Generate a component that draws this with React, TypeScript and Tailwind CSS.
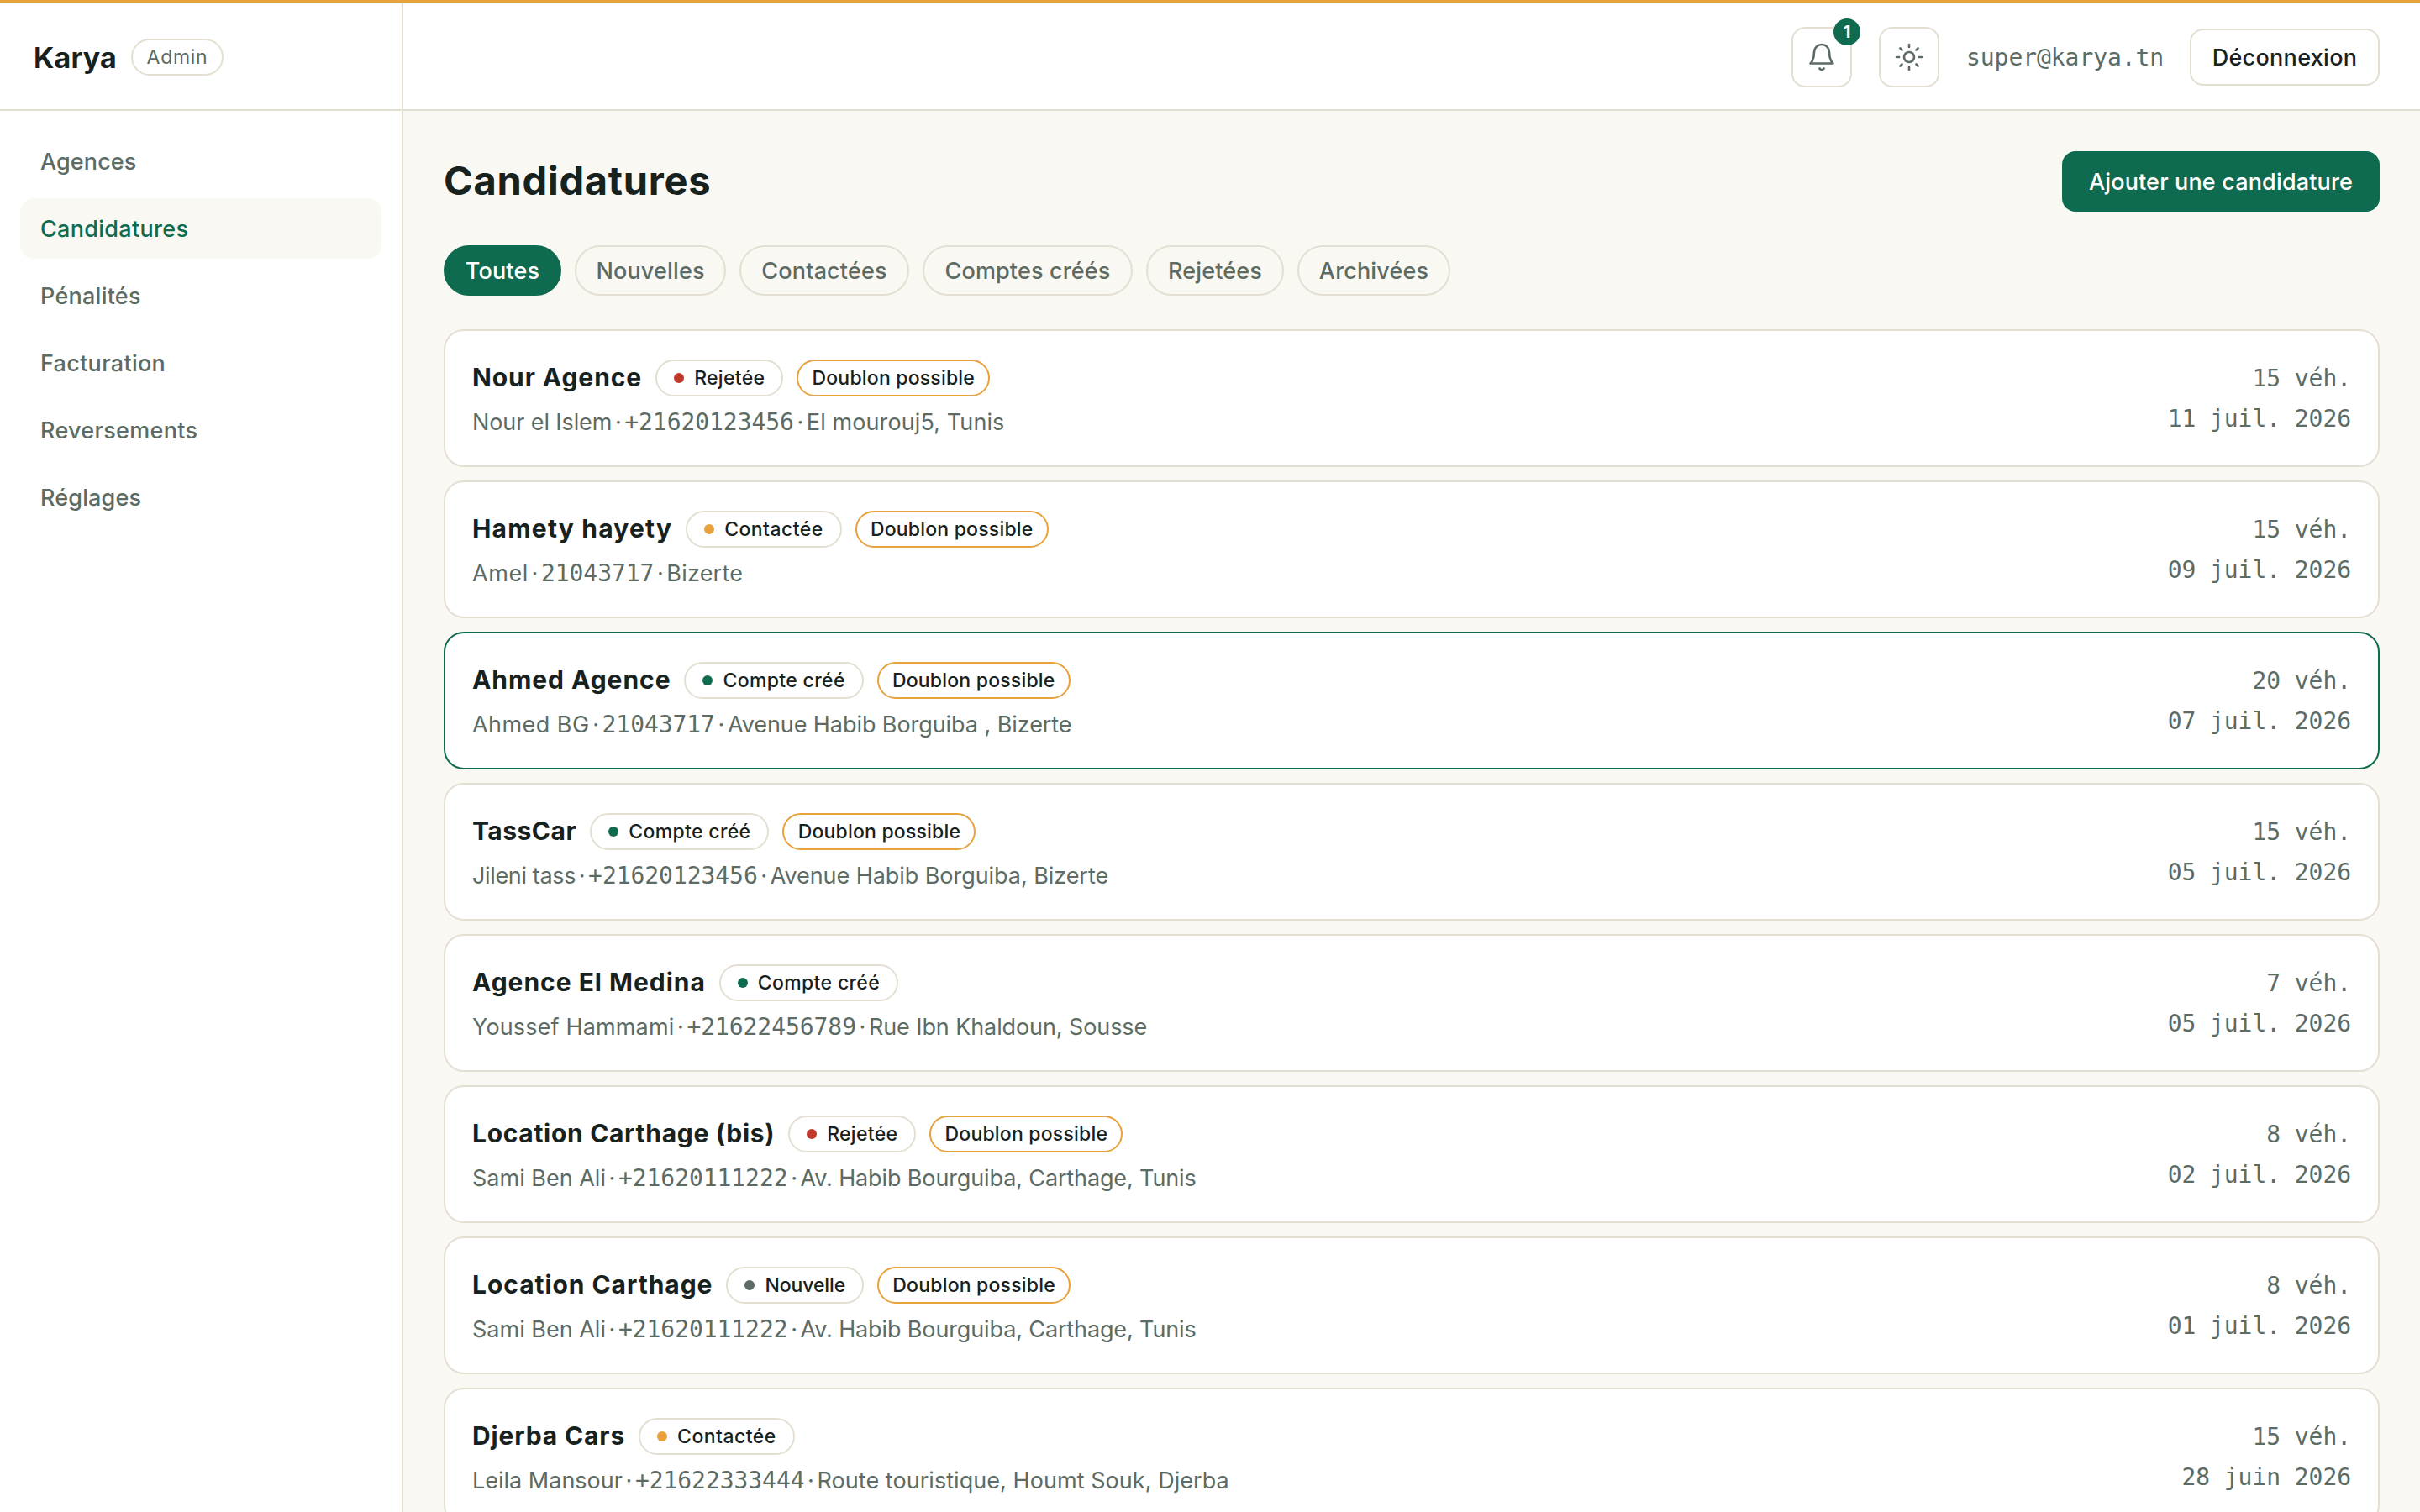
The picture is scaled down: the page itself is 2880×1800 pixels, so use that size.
import React from 'react';

type Status = 'Rejetée' | 'Contactée' | 'Compte créé' | 'Nouvelle';

interface Application {
  agency: string;
  agencyTracking: string;
  status: Status;
  duplicate: boolean;
  contact: string;
  contactTracking: string;
  phone: string;
  address: string;
  addressTracking: string;
  vehicles: number;
  date: string;
  active?: boolean;
}

const statusStyle: Record<Status, { dot: string; tracking: string }> = {
  'Rejetée': { dot: 'bg-[#c0392b]', tracking: 'tracking-[0.3px]' },
  'Contactée': { dot: 'bg-[#e9a23b]', tracking: 'tracking-[0.45px]' },
  'Compte créé': { dot: 'bg-[#0f6b4f]', tracking: 'tracking-[0.35px]' },
  'Nouvelle': { dot: 'bg-[#5c6b64]', tracking: 'tracking-[-0.1px]' },
};

const applications: Application[] = [
  { agency: 'Nour Agence', agencyTracking: 'tracking-[0.92px]', status: 'Rejetée', duplicate: true, contact: 'Nour el Islem', contactTracking: 'tracking-[-0.1px]', phone: '+21620123456', address: 'El mourouj5, Tunis', addressTracking: 'tracking-[0.1px]', vehicles: 15, date: '11 juil. 2026' },
  { agency: 'Hamety hayety', agencyTracking: 'tracking-[1.2px]', status: 'Contactée', duplicate: true, contact: 'Amel', contactTracking: 'tracking-[0.6px]', phone: '21043717', address: 'Bizerte', addressTracking: 'tracking-[0.2px]', vehicles: 15, date: '09 juil. 2026' },
  { agency: 'Ahmed Agence', agencyTracking: 'tracking-[0.95px]', status: 'Compte créé', duplicate: true, contact: 'Ahmed BG', contactTracking: 'tracking-[0.45px]', phone: '21043717', address: 'Avenue Habib Borguiba , Bizerte', addressTracking: 'tracking-[-0.07px]', vehicles: 20, date: '07 juil. 2026', active: true },
  { agency: 'TassCar', agencyTracking: 'tracking-[0.5px]', status: 'Compte créé', duplicate: true, contact: 'Jileni tass', contactTracking: 'tracking-[-0.35px]', phone: '+21620123456', address: 'Avenue Habib Borguiba, Bizerte', addressTracking: 'tracking-[-0.06px]', vehicles: 15, date: '05 juil. 2026' },
  { agency: 'Agence El Medina', agencyTracking: 'tracking-[0.97px]', status: 'Compte créé', duplicate: false, contact: 'Youssef Hammami', contactTracking: 'tracking-[0.15px]', phone: '+21622456789', address: 'Rue Ibn Khaldoun, Sousse', addressTracking: 'tracking-[-0.1px]', vehicles: 7, date: '05 juil. 2026' },
  { agency: 'Location Carthage (bis)', agencyTracking: 'tracking-[0.68px]', status: 'Rejetée', duplicate: true, contact: 'Sami Ben Ali', contactTracking: 'tracking-normal', phone: '+21620111222', address: 'Av. Habib Bourguiba, Carthage, Tunis', addressTracking: 'tracking-[-0.13px]', vehicles: 8, date: '02 juil. 2026' },
  { agency: 'Location Carthage', agencyTracking: 'tracking-[0.94px]', status: 'Nouvelle', duplicate: true, contact: 'Sami Ben Ali', contactTracking: 'tracking-normal', phone: '+21620111222', address: 'Av. Habib Bourguiba, Carthage, Tunis', addressTracking: 'tracking-[-0.13px]', vehicles: 8, date: '01 juil. 2026' },
  { agency: 'Djerba Cars', agencyTracking: 'tracking-[0.85px]', status: 'Contactée', duplicate: false, contact: 'Leila Mansour', contactTracking: 'tracking-normal', phone: '+21622333444', address: 'Route touristique, Houmt Souk, Djerba', addressTracking: 'tracking-[0.05px]', vehicles: 15, date: '28 juin 2026' },
];

const navItems = [
  { label: 'Agences', tracking: 'tracking-[0.1px]' },
  { label: 'Candidatures', tracking: 'tracking-[0.3px]' },
  { label: 'Pénalités', tracking: 'tracking-[0.25px]' },
  { label: 'Facturation', tracking: 'tracking-[0.3px]' },
  { label: 'Reversements', tracking: 'tracking-[0.3px]' },
  { label: 'Réglages', tracking: 'tracking-[0.15px]' },
];

const filters = [
  { label: 'Toutes', width: 'w-[140px]' },
  { label: 'Nouvelles', width: 'w-[180px]' },
  { label: 'Contactées', width: 'w-[202px]' },
  { label: 'Comptes créés', width: 'w-[250px]' },
  { label: 'Rejetées', width: 'w-[164px]' },
  { label: 'Archivées', width: 'w-[182px]' },
];

const mono = "font-['DejaVu_Sans_Mono','Liberation_Mono',monospace] text-[28px] tracking-[-0.06px]";

function BellIcon() {
  return (
    <svg className="size-9" viewBox="0 0 24 24" fill="none" stroke="currentColor" strokeWidth="1.75" strokeLinecap="round" strokeLinejoin="round">
      <path d="M18 8A6 6 0 0 0 6 8c0 7-3 9-3 9h18s-3-2-3-9" />
      <path d="M13.73 21a2 2 0 0 1-3.46 0" />
    </svg>
  );
}

function SunIcon() {
  return (
    <svg className="size-9" viewBox="0 0 24 24" fill="none" stroke="currentColor" strokeWidth="1.75" strokeLinecap="round" strokeLinejoin="round">
      <circle cx="12" cy="12" r="4" />
      <path d="M12 2v2M12 20v2M4.93 4.93l1.41 1.41M17.66 17.66l1.41 1.41M2 12h2M20 12h2M6.34 17.66l-1.41 1.41M19.07 4.93l-1.41 1.41" />
    </svg>
  );
}

function Sidebar() {
  return (
    <aside className="flex w-[480px] shrink-0 flex-col border-r-2 border-[#e4dfd2] bg-white">
      <div className="flex h-32 shrink-0 items-center border-b-2 border-[#e4dfd2] pt-0.5 pl-10">
        <span className="text-[34px] font-bold tracking-[0.1px]">Karya</span>
        <span className="ml-[17px] flex h-11 w-[110px] items-center justify-center rounded-full border-2 border-[#e4dfd2] text-[23px] tracking-[0.7px] text-[#5c6b64]">
          Admin
        </span>
      </div>
      <nav className="flex flex-col gap-2 p-6">
        {navItems.map((item) => (
          <a
            key={item.label}
            className={`flex h-18 w-[430px] items-center rounded-2xl pt-0.5 pl-6 font-medium ${item.tracking} ${
              item.label === 'Candidatures' ? 'bg-[#faf8f3] text-[#0f6b4f]' : 'text-[#5c6b64]'
            }`}
          >
            {item.label}
          </a>
        ))}
      </nav>
    </aside>
  );
}

function Header() {
  return (
    <header className="flex h-32 shrink-0 items-center justify-end border-b-2 border-[#e4dfd2] bg-white pt-0.5 pr-12">
      <button className="relative flex size-18 items-center justify-center rounded-2xl border-2 border-[#e4dfd2] text-[#5c6b64]">
        <BellIcon />
        <span className="absolute -top-3 -right-3 flex size-8 items-center justify-center rounded-full bg-[#0f6b4f] text-[20px] font-bold text-white">
          1
        </span>
      </button>
      <button className="ml-8 flex size-18 items-center justify-center rounded-2xl border-2 border-[#e4dfd2] text-[#5c6b64]">
        <SunIcon />
      </button>
      <span className={`ml-8 w-[235px] pt-0.5 text-[#5c6b64] ${mono}`}>super@karya.tn</span>
      <button className="ml-[31px] flex h-17 w-[226px] items-center justify-center rounded-2xl border-2 border-[#e4dfd2] pt-0.5 font-medium tracking-[0.3px]">
        Déconnexion
      </button>
    </header>
  );
}

function Separator() {
  return <span className="w-[15px] text-center">·</span>;
}

function ApplicationCard({ item }: { item: Application }) {
  const status = statusStyle[item.status];
  return (
    <article
      className={`flex h-[164px] shrink-0 justify-between rounded-3xl border-2 bg-white p-8 ${
        item.active ? 'border-[#0f6b4f]' : 'border-[#e4dfd2]'
      }`}
    >
      <div>
        <div className="flex h-12 items-center gap-4">
          <h2 className={`pb-0.5 text-[30px] leading-9 font-bold ${item.agencyTracking}`}>{item.agency}</h2>
          <span className="flex h-11 items-center gap-3 rounded-full border-2 border-[#e4dfd2] px-5 text-[23px] font-medium">
            <span className={`size-3 rounded-full ${status.dot}`} />
            <span className={status.tracking}>{item.status}</span>
          </span>
          {item.duplicate && (
            <span className="flex h-11 w-[230px] items-center justify-center rounded-full border-2 border-[#e9a23b] text-[23px] font-medium tracking-[0.2px]">
              Doublon possible
            </span>
          )}
        </div>
        <div className="mt-[9px] flex h-10 items-center whitespace-nowrap text-[#5c6b64]">
          <span className={item.contactTracking}>{item.contact}</span>
          <Separator />
          <span className={mono}>{item.phone}</span>
          <Separator />
          <span className={item.addressTracking}>{item.address}</span>
        </div>
      </div>
      <div className={`pt-px text-right leading-12 whitespace-nowrap text-[#5c6b64] ${mono}`}>
        <p>{item.vehicles} véh.</p>
        <p>{item.date}</p>
      </div>
    </article>
  );
}

export default function App() {
  return (
    <div className="flex h-[1800px] w-[2880px] flex-col overflow-hidden border-t-4 border-[#e9a23b] bg-[#faf8f3] font-['Inter',sans-serif] text-[27px] text-[#17211e]">
      <div className="flex min-h-0 grow">
        <Sidebar />
        <div className="flex min-w-0 grow flex-col">
          <Header />
          <main className="flex min-h-0 grow flex-col overflow-hidden px-12 pt-12">
            <div className="flex h-18 shrink-0 items-center justify-between">
              <h1 className="pb-0.5 text-[47px] font-bold tracking-[0.75px]">Candidatures</h1>
              <button className="flex h-18 w-[378px] items-center justify-center rounded-2xl bg-[#0f6b4f] pt-0.5 font-medium tracking-[0.15px] text-white">
                Ajouter une candidature
              </button>
            </div>
            <div className="mt-10 flex shrink-0 gap-4">
              {filters.map((filter, index) => (
                <button
                  key={filter.label}
                  className={`flex h-15 items-center justify-center rounded-full border-2 pt-0.5 font-medium tracking-[0.15px] ${filter.width} ${
                    index === 0
                      ? 'border-[#0f6b4f] bg-[#0f6b4f] text-white'
                      : 'border-[#e4dfd2] text-[#5c6b64]'
                  }`}
                >
                  {filter.label}
                </button>
              ))}
            </div>
            <section className="mt-10 flex flex-col gap-4">
              {applications.map((item) => (
                <ApplicationCard key={item.agency} item={item} />
              ))}
            </section>
          </main>
        </div>
      </div>
    </div>
  );
}
